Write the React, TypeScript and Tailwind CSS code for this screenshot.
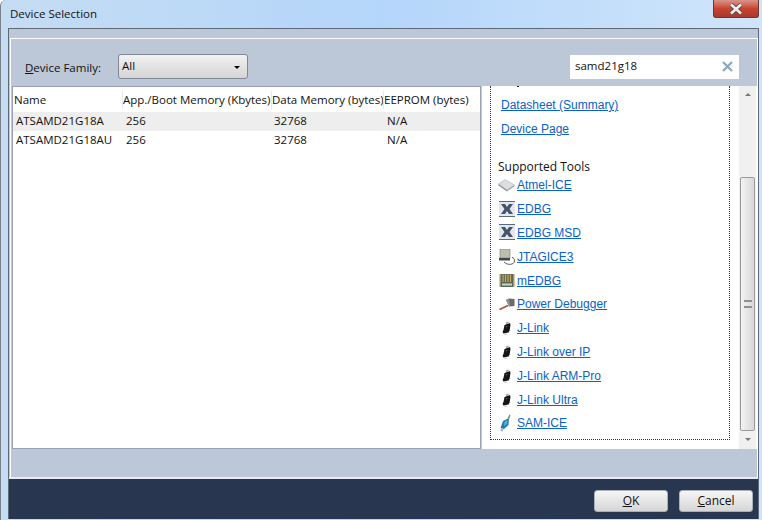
const segoe = { fontFamily: '"Open Sans", "Noto Sans", sans-serif' };
const arial = { fontFamily: '"Liberation Sans", Arial, sans-serif' };

const rows = [
  { name: 'ATSAMD21G18A', app: '256', data: '32768', eeprom: 'N/A', selected: true },
  { name: 'ATSAMD21G18AU', app: '256', data: '32768', eeprom: 'N/A', selected: false },
];

function IceIcon() {
  return (
    <svg width="17" height="14" viewBox="0 0 17 14">
      <path d="M0.5 6 L7 1.5 L16.5 7 L9 12 Z" fill="#dcdee0" stroke="#b0b4b9" strokeWidth="0.6" />
      <path d="M0.5 6 L9 12 L9 13.5 L0.5 7.5 Z" fill="#8d9196" />
      <path d="M9 12 L16.5 7 L16.5 8.5 L9 13.5 Z" fill="#a4a8ad" />
    </svg>
  );
}

function EdbgIcon() {
  return (
    <svg width="16" height="17" viewBox="0 0 16 17">
      <rect x="0" y="0" width="16" height="16" fill="#e4e7ec" />
      <rect x="0" y="0" width="16" height="1" fill="#5b6a80" />
      <rect x="0" y="15" width="16" height="1" fill="#5b6a80" />
      <path d="M2 3 H6 L8 6 L10 3 H14 L10.5 8 L14 13 H10 L8 10 L6 13 H2 L5.5 8 Z" fill="#45536b" />
    </svg>
  );
}

function JtagIcon() {
  return (
    <svg width="16" height="16" viewBox="0 0 16 16">
      <rect x="1" y="0" width="10" height="9" fill="#bcbeae" stroke="#7a7c74" strokeWidth="0.6" />
      <rect x="0" y="9" width="11" height="2.5" fill="#3f4650" />
      <path d="M5 13 C8 16.5 15.5 16 15.5 12 C15.5 10 14.5 8.5 13 8.5" fill="none" stroke="#333" strokeWidth="0.8" />
    </svg>
  );
}

function MedbgIcon() {
  return (
    <svg width="16" height="13" viewBox="0 0 16 13">
      <rect x="0" y="0" width="16" height="13" fill="#d9c9a8" />
      <rect x="1.5" y="0" width="13" height="13" fill="#5a6a52" />
      <path d="M4 0.5 V8 M6.5 0.5 V8 M9 0.5 V8 M11.5 0.5 V8" stroke="#c9a860" strokeWidth="1.2" />
      <rect x="3" y="9.5" width="10" height="2" fill="#c8d4ce" />
    </svg>
  );
}

function HammerIcon() {
  return (
    <svg width="16" height="13" viewBox="0 0 16 13">
      <path d="M0.5 11.5 L9 7.5" stroke="#a5553f" strokeWidth="1.6" />
      <path d="M7 2 L10 0.5 L15.5 1 L15.5 8 L10 8.5 Z" fill="#6d6a68" />
      <path d="M7 2 L10 0.5 L11 8 L10 8.5 Z" fill="#96928f" />
    </svg>
  );
}

function JLinkIcon() {
  return (
    <svg width="17" height="14" viewBox="0 0 17 14">
      <path d="M6.5 4 L12 2 L12.5 4 L11.5 10 L10.5 11.5 L5.5 12.5 L4.5 11 L5.5 9 Z" fill="#161616" />
      <path d="M8 1.5 L10.5 0.5 L10.5 2.2 L8 3 Z" fill="#9a9a9a" />
      <path d="M6.5 13 L9 12.5 L9 13.5 L6.5 14 Z" fill="#c4c4c4" />
      <path d="M7.5 6 L9.5 5.5" stroke="#777" strokeWidth="0.7" />
    </svg>
  );
}

function SamIceIcon() {
  return (
    <svg width="17" height="18" viewBox="0 0 17 18">
      <path d="M5 7 L11 4 L10.5 11 L6 15 L2.5 14 Z" fill="#1f7fae" />
      <path d="M6.5 8 L9.5 6 L9 10 L6 12 Z" fill="#55b3d8" />
      <path d="M9.5 4.5 L11.5 0.5 L12.5 1 L11.2 5 Z" fill="#6a8a9c" />
      <path d="M3 14.5 L5.5 15 L4.5 17.5 L2.5 17 Z" fill="#a9b3ba" />
    </svg>
  );
}

const tools = [
  { label: 'Atmel-ICE', icon: <IceIcon /> },
  { label: 'EDBG', icon: <EdbgIcon /> },
  { label: 'EDBG MSD', icon: <EdbgIcon /> },
  { label: 'JTAGICE3', icon: <JtagIcon /> },
  { label: 'mEDBG', icon: <MedbgIcon /> },
  { label: 'Power Debugger', icon: <HammerIcon /> },
  { label: 'J-Link', icon: <JLinkIcon /> },
  { label: 'J-Link over IP', icon: <JLinkIcon /> },
  { label: 'J-Link ARM-Pro', icon: <JLinkIcon /> },
  { label: 'J-Link Ultra', icon: <JLinkIcon /> },
  { label: 'SAM-ICE', icon: <SamIceIcon /> },
];

function Button({ children }: { children: React.ReactNode }) {
  return (
    <button className="h-[22px] w-[74px] rounded-[3px] border border-[#a9b0bb] bg-gradient-to-b from-[#f6f6f6] to-[#d6d6d6] text-[12px] text-[#111]">
      {children}
    </button>
  );
}

export default function App() {
  return (
    <div
      className="flex h-[520px] w-[762px] flex-col overflow-hidden rounded-tl-[6px] border-l border-[#7b838c] bg-gradient-to-r from-[#c5dcf3] via-[#b4d6fa] to-[#d0e5fb] pb-[1px] text-[11.5px] text-[#111]"
      style={segoe}
    >
      <div className="flex h-[28px] shrink-0 items-start justify-between pl-[9px] pr-[3px]">
        <span className="pt-[5px] leading-[18px]">Device Selection</span>
        <div className="flex h-[18px] w-[46px] items-center justify-center rounded-b-[3px] border border-t-0 border-[#6b3a33] bg-gradient-to-b from-[#d9938a] via-[#c8442f] to-[#a83a2c]">
          <svg width="16" height="12" viewBox="0 0 16 12">
            <path d="M3 1.5 L13 10.5 M13 1.5 L3 10.5" stroke="#4a4a4a" strokeWidth="4.2" />
            <path d="M3 1.5 L13 10.5 M13 1.5 L3 10.5" stroke="#eeeeee" strokeWidth="2.6" />
          </svg>
        </div>
      </div>

      <div className="ml-[7px] mr-[3px] flex min-h-0 flex-1 flex-col border-x border-t border-[#5e6a78] bg-[#bcc7d8]">
        <div className="ml-[1px] mt-[9px] flex min-h-0 flex-1 flex-col border-x border-t border-white pl-[1px]">
          <div className="flex h-[47px] shrink-0 items-start">
            <div className="flex w-[106px] pl-[13px] pt-[20px] leading-[18px]">
              <span className="whitespace-nowrap"><u>D</u>evice Family:</span>
            </div>
            <div className="mt-[15px] flex h-[25px] w-[130px] items-start justify-between rounded-[3px] border border-[#7f8894] bg-gradient-to-b from-[#f2f2f2] to-[#d5d5d5] pl-[3px] pr-[7px] pt-[2px] leading-[18px]">
              <span>All</span>
              <span className="mt-[9px] h-0 w-0 border-x-[3px] border-t-[3px] border-x-transparent border-t-black" />
            </div>
            <div className="ml-[322px] mt-[16px] flex h-[24px] w-[169px] items-center justify-between bg-white pb-[2px] pl-[5px] pr-[6px]">
              <span>samd21g18</span>
              <svg width="11" height="11" viewBox="0 0 11 11">
                <path d="M1 1 L10 10 M10 1 L1 10" stroke="#8fa9bf" strokeWidth="2.4" />
              </svg>
            </div>
          </div>

          <div className="flex h-[363px] shrink-0 items-stretch">
            <div className="w-[469px] shrink-0 border border-[#99a3b8] bg-white">
              <div className="flex h-[25px] items-center leading-[18px]">
                <div className="w-[109px] pl-[1px]">Name</div>
                <div className="w-[149px] whitespace-nowrap border-l border-[#e4e8ef]">App./Boot Memory (Kbytes)</div>
                <div className="w-[112px] whitespace-nowrap border-l border-[#e4e8ef]">Data Memory (bytes)</div>
                <div className="whitespace-nowrap border-l border-[#e4e8ef]">EEPROM (bytes)</div>
              </div>
              {rows.map((r) => (
                <div key={r.name} className={`flex h-[18.6px] items-center leading-[18px] ${r.selected ? 'bg-[#eeeeee]' : ''}`}>
                  <div className="w-[110px] pl-[3px]">{r.name}</div>
                  <div className="w-[148px] pl-[3px]">{r.app}</div>
                  <div className="w-[112px] pl-[3px]">{r.data}</div>
                  <div className="pl-[4px]">{r.eeprom}</div>
                </div>
              ))}
            </div>

            <div className="ml-[1px] flex min-w-0 flex-1 overflow-hidden bg-white">
              <div className="mb-[9px] ml-[8px] flex w-[240px] shrink-0 flex-col border-x border-b border-dotted border-[#333] pl-[7px]">
                <div className="ml-[19px] h-[1px] w-[2px] bg-[#222]" />
                <div className="flex flex-col pl-[3px] pt-[9px] text-[#0a62c9]" style={arial}>
                  <a className="h-[24px] text-[12px] underline">Datasheet (Summary)</a>
                  <a className="h-[24px] text-[12px] underline">Device Page</a>
                </div>
                <div className="mt-[14px] h-[18px] text-[12px] leading-[18px]">Supported Tools</div>
                <div className="flex flex-col" style={arial}>
                  {tools.map((t) => (
                    <div key={t.label} className="flex h-[23.8px] items-center gap-[2px] pb-[5px]">
                      <span className="flex w-[17px] justify-center">{t.icon}</span>
                      <a className="text-[12px] text-[#0a62c9] underline">{t.label}</a>
                    </div>
                  ))}
                </div>
              </div>
              <div className="ml-[9px] flex h-full w-[17px] shrink-0 flex-col items-center bg-[#f0f0f0]">
                <span className="mt-[7px] h-0 w-0 border-x-[3px] border-b-[3px] border-x-transparent border-b-[#777]" />
                <div className="mt-[81px] flex h-[254px] w-[15px] items-center justify-center rounded-[2px] border border-[#9a9a9a] bg-gradient-to-r from-[#f4f4f4] to-[#d8d8d8]">
                  <span className="h-[8px] w-[8px] border-y-2 border-[#8f8f8f]" />
                </div>
                <span className="mt-[7px] h-0 w-0 border-x-[3px] border-t-[3px] border-x-transparent border-t-[#777]" />
              </div>
            </div>
          </div>

          <div className="flex-1" />
        </div>
        <div className="flex h-[42px] shrink-0 items-center justify-end gap-[11px] border-t-2 border-[#e8ecf2] bg-[#283650] pr-[5px] pt-[4px]">
          <Button><u>O</u>K</Button>
          <Button><u>C</u>ancel</Button>
        </div>
      </div>
    </div>
  );
}
